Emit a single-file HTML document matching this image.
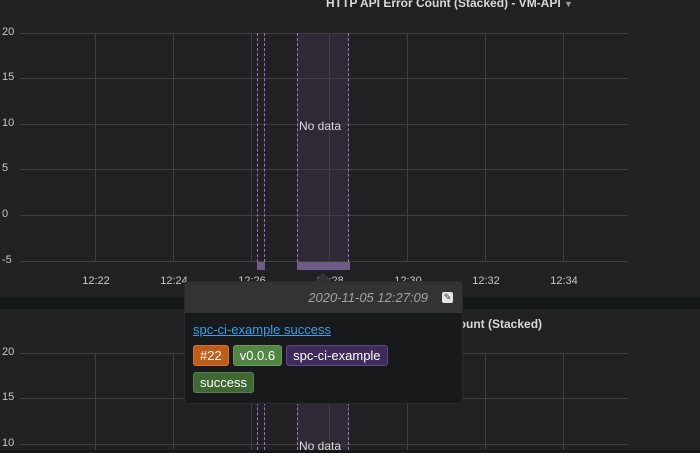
<!DOCTYPE html>
<html><head><style>
body{margin:0;width:700px;height:450px;overflow:hidden;background:#161719;font-family:"Liberation Sans",sans-serif;position:relative}
.p{position:absolute;left:0;width:700px;background:#212124}
.a{position:absolute}
.h{position:absolute;left:20px;width:608px;height:1px;background:#3f3f42}
.v{position:absolute;width:1px;background:#3f3f42}
.d{position:absolute;width:0;border-left:1px dashed #a36bd6}
.yl{position:absolute;left:2px;font-size:11px;color:#c7c7c7}
.xl{position:absolute;font-size:11px;color:#c7c7c7;width:40px;margin-left:-20px;text-align:center;top:275px}
.t{position:absolute;font-size:12px;font-weight:bold;color:#d8d9da}
.tag{display:inline-block;font-size:13px;color:#fff;padding:2px 6px;border-radius:3px;margin-right:4px;border:1px solid rgba(255,255,255,.15)}
</style></head><body>
<div class="p" style="top:0;height:297px"></div>
<div class="p" style="top:309px;height:141px"></div>
<div class="t" style="left:326px;top:-4px">HTTP API Error Count (Stacked) - VM-API <span style="color:#999;font-size:9px">▼</span></div>
<div class="t" style="left:360px;top:317px">HTTP API Error Count (Stacked)</div>
<!-- shading -->
<div class="a" style="left:297px;top:33px;width:52px;height:229px;background:#2f2936"></div>
<div class="a" style="left:257px;top:262px;width:8px;height:8px;background:#6d5a87"></div>
<div class="a" style="left:297px;top:262px;width:53px;height:8px;background:#6d5a87"></div>
<div class="a" style="left:297px;top:353px;width:52px;height:97px;background:#2f2936"></div>
<div class="h" style="top:33px"></div><div class="h" style="top:78px"></div><div class="h" style="top:124px"></div><div class="h" style="top:169px"></div><div class="h" style="top:215px"></div><div class="h" style="top:261px"></div>
<div class="h" style="top:353px"></div><div class="h" style="top:398px"></div><div class="h" style="top:444px"></div>
<div class="v" style="left:95px;top:33px;height:229px"></div><div class="v" style="left:173px;top:33px;height:229px"></div><div class="v" style="left:251px;top:33px;height:229px"></div><div class="v" style="left:329px;top:33px;height:229px"></div><div class="v" style="left:407px;top:33px;height:229px"></div><div class="v" style="left:485px;top:33px;height:229px"></div><div class="v" style="left:563px;top:33px;height:229px"></div>
<div class="v" style="left:95px;top:353px;height:97px"></div><div class="v" style="left:173px;top:353px;height:97px"></div><div class="v" style="left:251px;top:353px;height:97px"></div><div class="v" style="left:329px;top:353px;height:97px"></div><div class="v" style="left:407px;top:353px;height:97px"></div><div class="v" style="left:485px;top:353px;height:97px"></div><div class="v" style="left:563px;top:353px;height:97px"></div>
<div class="d" style="left:257px;top:33px;height:229px"></div><div class="d" style="left:264px;top:33px;height:229px"></div><div class="d" style="left:297px;top:33px;height:229px"></div><div class="d" style="left:348px;top:33px;height:229px"></div>
<div class="d" style="left:257px;top:353px;height:97px"></div><div class="d" style="left:264px;top:353px;height:97px"></div><div class="d" style="left:297px;top:353px;height:97px"></div><div class="d" style="left:348px;top:353px;height:97px"></div>
<div class="yl" style="top:26px">20</div><div class="yl" style="top:71px">15</div><div class="yl" style="top:117px">10</div><div class="yl" style="top:162px">5</div><div class="yl" style="top:208px">0</div><div class="yl" style="top:254px">-5</div>
<div class="yl" style="top:346px">20</div><div class="yl" style="top:391px">15</div><div class="yl" style="top:437px">10</div>
<div class="xl" style="left:96px">12:22</div><div class="xl" style="left:174px">12:24</div><div class="xl" style="left:252px">12:26</div><div class="xl" style="left:330px">12:28</div><div class="xl" style="left:408px">12:30</div><div class="xl" style="left:486px">12:32</div><div class="xl" style="left:564px">12:34</div>
<div class="a" style="left:299px;top:119px;font-size:12px;color:#d8d9da">No data</div>
<div class="a" style="left:299px;top:439px;font-size:12px;color:#d8d9da">No data</div>
<!-- tooltip -->
<div class="a" style="left:315px;top:273px;width:0;height:0;border-left:8px solid transparent;border-right:8px solid transparent;border-bottom:8px solid #333336;z-index:2"></div>
<div class="a" style="left:184px;top:281px;width:277px;height:121px;border-radius:4px;background:#18191b;border:1px solid #2a2b2e;overflow:hidden;z-index:2">
<div style="height:31px;background:#333336;position:relative">
<span style="position:absolute;right:34px;top:8px;font-size:13px;font-style:italic;color:#9fa1a6">2020-11-05 12:27:09</span>
<span style="position:absolute;right:9px;top:10px;width:11px;height:11px;background:#e6e6e6;border-radius:2px;font-size:9px;line-height:11px;text-align:center;color:#333">✎</span>
</div>
<div style="padding:9px 8px 0">
<div style="font-size:13px;color:#33a2e5;text-decoration:underline;margin-bottom:8px">spc-ci-example success</div>
<div style="margin-bottom:6px"><span class="tag" style="background:#c15c17">#22</span><span class="tag" style="background:#508642">v0.0.6</span><span class="tag" style="background:#3f2b5b">spc-ci-example</span></div>
<div><span class="tag" style="background:#3f6833">success</span></div>
</div></div>
</body></html>
